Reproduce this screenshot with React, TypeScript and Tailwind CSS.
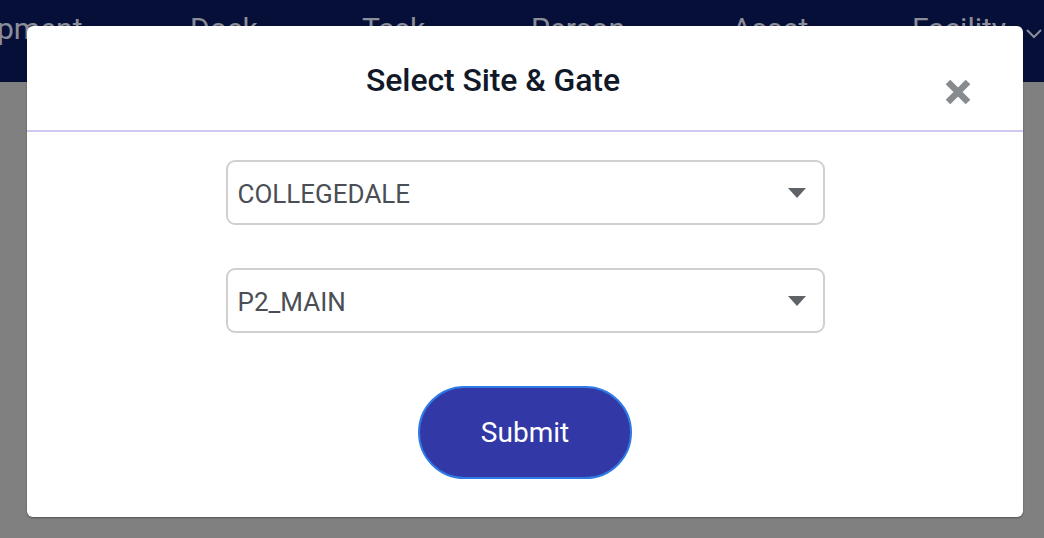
import React from "react";

export default function App() {
  return (
    <div
      className="relative w-[1044px] h-[538px] overflow-hidden bg-[#808080]"
      style={{ fontFamily: "Roboto, 'Liberation Sans', sans-serif" }}
    >
      <div className="h-[82px] bg-[#050f38] flex items-start pt-[6px] text-[30px] text-[#8b8d98] whitespace-nowrap">
        <span className="ml-[-3px] w-[193px]">pment</span>
        <span className="w-[172px]">Dock</span>
        <span className="w-[169px]">Task</span>
        <span className="w-[201px]">Person</span>
        <span className="w-[180px]">Asset</span>
        <span className="flex items-center gap-[20px]">
          Facility
          <svg width="16" height="10" viewBox="0 0 16 10" className="mt-[10px]">
            <path d="M1 1 L8 8 L15 1" fill="none" stroke="#8b8d98" strokeWidth="2" />
          </svg>
        </span>
      </div>

      <div className="absolute left-[27px] top-[26px] w-[996px] h-[491px] bg-white rounded-[6px] shadow-[0_1px_2px_rgba(0,0,0,0.35)] flex flex-col">
        <div className="relative h-[106px] flex items-center justify-center pr-[64px] border-b-2 border-[#cfcaf0]">
          <h2 className="text-[32px] font-medium text-[#111827] mt-[4px] tracking-[-0.1px]">Select Site &amp; Gate</h2>
          <svg
            width="30"
            height="30"
            viewBox="0 0 30 30"
            className="absolute left-[916px] top-[51px]"
          >
            <path d="M5 5 L25 25 M25 5 L5 25" stroke="#878b8e" strokeWidth="6.5" strokeLinecap="butt" />
          </svg>
        </div>
        <div className="flex flex-col items-center pt-[28px]">
          <div className="w-[599px] h-[65px] border-2 border-[#d0d0d0] rounded-[9px] flex items-center justify-between pl-[10px] pr-[17px] text-[26px] text-[#4b4f55]">
            <span className="mt-[3px]">COLLEGEDALE</span>
            <svg width="18" height="10" viewBox="0 0 18 10">
              <path d="M0 0 L18 0 L9 10 Z" fill="#5f6368" />
            </svg>
          </div>
          <div className="mt-[43px] w-[599px] h-[65px] border-2 border-[#d0d0d0] rounded-[9px] flex items-center justify-between pl-[10px] pr-[17px] text-[26px] text-[#4b4f55]">
            <span className="mt-[3px]">P2_MAIN</span>
            <svg width="18" height="10" viewBox="0 0 18 10">
              <path d="M0 0 L18 0 L9 10 Z" fill="#5f6368" />
            </svg>
          </div>
          <button className="mt-[53px] w-[214px] h-[93px] rounded-full bg-[#3238a6] border-2 border-[#2f7ae5] text-white text-[28px] flex items-center justify-center">
            Submit
          </button>
        </div>
      </div>
    </div>
  );
}
